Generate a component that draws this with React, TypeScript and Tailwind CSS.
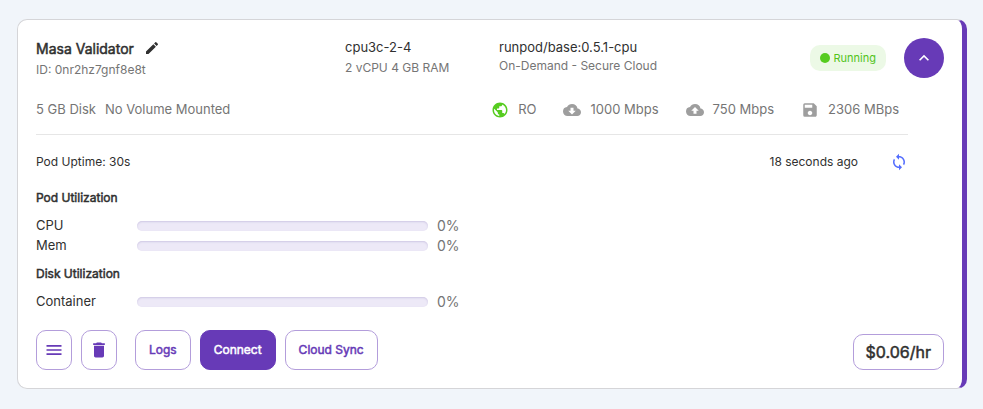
import type { ReactNode } from "react";
import {
  MdCloudDownload,
  MdCloudUpload,
  MdDelete,
  MdEdit,
  MdKeyboardArrowUp,
  MdMenu,
  MdPublic,
  MdSave,
  MdSync,
} from "react-icons/md";

function Stat({ icon, children }: { icon: ReactNode; children: ReactNode }) {
  return (
    <li className="flex items-center gap-[9px]">
      {icon}
      <span>{children}</span>
    </li>
  );
}

function Meter({ label, value }: { label: string; value: number }) {
  return (
    <div className="flex h-5 items-center">
      <span className="w-[101px] text-[13px] leading-5">{label}</span>
      <div
        role="progressbar"
        aria-label={label}
        aria-valuenow={value}
        aria-valuemin={0}
        aria-valuemax={100}
        className="mt-px h-2.5 w-[291px] overflow-hidden rounded-[5px] bg-[#ede9f7] shadow-[inset_0_1px_2px_#cfc8e4]"
      >
        <div className="h-full bg-[#673ab7]" style={{ width: `${value}%` }} />
      </div>
      <span className="mt-px ml-[9px] text-sm leading-5 text-[#757575]">{value}%</span>
    </div>
  );
}

const strong = "font-normal [-webkit-text-stroke:0.5px_currentColor]";
const button = `h-10 rounded-[10px] border text-xs ${strong}`;
const outlined = `${button} border-[#b39ddb] text-[#673ab7]`;

export default function App() {
  return (
    <div className="min-h-screen bg-[#f1f5fa] px-4 py-[19px] pl-[17px] font-['Inter','Liberation_Sans',sans-serif] text-[#303030]">
      <article className="rounded-[10px] border border-r-[5px] border-[#d5d5d8] border-r-[#673ab7] bg-white p-[18px]">
        <header className="grid grid-cols-[309fr_154fr_445fr] grid-rows-[40px]">
          <div>
            <div className="flex h-[22px] items-center gap-2.5">
              <h1 className={`text-sm leading-5 ${strong}`}>Masa Validator</h1>
              <button type="button" aria-label="Edit name" className="mb-0.5">
                <MdEdit size={16} />
              </button>
            </div>
            <p className="text-xs leading-5 text-[#757575]">ID: 0nr2hz7gnf8e8t</p>
          </div>
          <div>
            <p className="text-[13px] leading-[19px]">cpu3c-2-4</p>
            <p className="mt-px text-xs leading-5 text-[#757575]">2 vCPU 4 GB RAM</p>
          </div>
          <div className="flex justify-between">
            <div>
              <p className="text-[13px] leading-[19px]">runpod/base:0.5.1-cpu</p>
              <p className="text-xs leading-[18px] text-[#757575]">On-Demand - Secure Cloud</p>
            </div>
            <div className="flex items-center gap-[18px]">
              <span className="flex h-[26px] items-center gap-1 rounded-[10px] bg-[#ecf9e6] px-2.5 text-[11px] text-[#52c41a]">
                <span className="size-2.5 rounded-full bg-[#56cc20]" />
                Running
              </span>
              <button
                type="button"
                aria-label="Collapse"
                className="grid size-10 place-items-center rounded-full bg-[#673ab7] text-white"
              >
                <MdKeyboardArrowUp size={20} />
              </button>
            </div>
          </div>
        </header>

        <div className="mr-9 flex items-center justify-between border-b border-[#e6e6e6] pt-[21px] pb-[14px] text-[13px] leading-[21px] text-[#757575]">
          <div className="flex gap-[9px]">
            <span>5 GB Disk</span>
            <span>No Volume Mounted</span>
          </div>
          <ul className="mr-[9px] flex gap-[27px]">
            <Stat icon={<MdPublic size={18} className="text-[#56cc20]" />}>RO</Stat>
            <Stat icon={<MdCloudDownload size={18} className="text-[#9e9e9e]" />}>1000 Mbps</Stat>
            <Stat icon={<MdCloudUpload size={18} className="text-[#9e9e9e]" />}>750 Mbps</Stat>
            <Stat icon={<MdSave size={18} className="text-[#9e9e9e]" />}>2306 MBps</Stat>
          </ul>
        </div>

        <div className="mt-[17px] mr-9 flex h-5 items-center justify-between text-xs">
          <span>Pod Uptime: 30s</span>
          <div className="flex items-center gap-8">
            <span>18 seconds ago</span>
            <button type="button" aria-label="Refresh" className="text-[#536dfe]">
              <MdSync size={18} />
            </button>
          </div>
        </div>

        <section className="mt-4">
          <h2 className={`mb-[7px] text-xs leading-5 ${strong}`}>Pod Utilization</h2>
          <Meter label="CPU" value={0} />
          <Meter label="Mem" value={0} />
        </section>
        <section className="mt-[9px]">
          <h2 className={`mb-[7px] text-xs leading-5 ${strong}`}>Disk Utilization</h2>
          <Meter label="Container" value={0} />
        </section>

        <footer className="mt-[19px] flex items-end justify-between">
          <div className="flex gap-[9px]">
            <button type="button" aria-label="More actions" className={`${outlined} grid w-9 place-items-center`}>
              <MdMenu size={20} />
            </button>
            <button type="button" aria-label="Delete" className={`${outlined} mr-[9px] grid w-9 place-items-center`}>
              <MdDelete size={20} />
            </button>
            <button type="button" className={`${outlined} px-[13px]`}>
              Logs
            </button>
            <button type="button" className={`${button} border-[#673ab7] bg-[#673ab7] px-[13px] text-white`}>
              Connect
            </button>
            <button type="button" className={`${outlined} px-[13px]`}>
              Cloud Sync
            </button>
          </div>
          <div className={`rounded-[10px] border border-[#b39ddb] px-3 text-base leading-[34px] ${strong}`}>
            $0.06/hr
          </div>
        </footer>
      </article>
    </div>
  );
}
